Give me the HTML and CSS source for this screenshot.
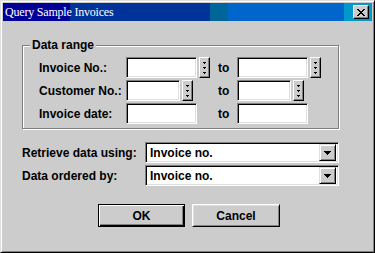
FILE: index.html
```html
<!DOCTYPE html>
<html lang="en">
<head>
    <meta charset="UTF-8">
    <meta name="viewport" content="width=device-width, initial-scale=1.0">
    <title>Query Sample Invoices</title>
    <link rel="stylesheet" href="styles.css">
</head>
<body>

    <div class="window">
        <div class="titlebar">
            <span class="title">Query Sample Invoices</span>
            <button class="close" type="button">
                <svg width="8" height="7" viewBox="0 0 8 7" shape-rendering="crispEdges">
                    <path d="M0 0h2v1H0zM6 0h2v1H6zM1 1h2v1H1zM5 1h2v1H5zM2 2h4v1H2zM3 3h2v1H3zM2 4h4v1H2zM1 5h2v1H1zM5 5h2v1H5zM0 6h2v1H0zM6 6h2v1H6z" fill="#000"/>
                </svg>
            </button>
        </div>

        <div class="content">
            <!-- Data range -->
            <div class="group">
                <div class="group-title">Data range</div>
                <div class="range">
                    <label>Invoice No.:</label>
                    <div class="field">
                        <input class="text wide" type="text">
                        <span class="spin"></span>
                    </div>
                    <span class="to">to</span>
                    <div class="field">
                        <input class="text wide" type="text">
                        <span class="spin"></span>
                    </div>

                    <label>Customer No.:</label>
                    <div class="field">
                        <input class="text short" type="text">
                        <span class="spin"></span>
                    </div>
                    <span class="to">to</span>
                    <div class="field">
                        <input class="text short" type="text">
                        <span class="spin"></span>
                    </div>

                    <label>Invoice date:</label>
                    <div class="field">
                        <input class="text wide" type="text">
                    </div>
                    <span class="to">to</span>
                    <div class="field">
                        <input class="text wide" type="text">
                    </div>
                </div>
            </div>

            <div class="options">
                <label>Retrieve data using:</label>
                <div class="combo">
                    <span class="value">Invoice no.</span>
                    <span class="drop"></span>
                </div>
                <label>Data ordered by:</label>
                <div class="combo">
                    <span class="value">Invoice no.</span>
                    <span class="drop"></span>
                </div>
            </div>

            <div class="buttons">
                <button class="btn default" type="button">OK</button>
                <button class="btn" type="button">Cancel</button>
            </div>
        </div>
    </div>

    <script>
        // flechitas del spinner y del combo
        const spinSvg = '<svg width="3" height="12" viewBox="0 0 3 12" shape-rendering="crispEdges"><path d="M0 0h3v1H0zM1 1h1v1H1zM0 5h3v1H0zM1 6h1v1H1zM0 10h3v1H0zM1 11h1v1H1z" fill="#000"/></svg>';
        const dropSvg = '<svg width="7" height="4" viewBox="0 0 7 4" shape-rendering="crispEdges"><path d="M0 0h7v1H0zM1 1h5v1H1zM2 2h3v1H2zM3 3h1v1H3z" fill="#000"/></svg>';

        document.querySelectorAll('.spin').forEach(el => el.innerHTML = spinSvg);
        document.querySelectorAll('.drop').forEach(el => el.innerHTML = dropSvg);
    </script>
</body>
</html>
```

FILE: styles.css
```css
* {
    box-sizing: border-box;
}

body {
    margin: 0;
    font-family: "Liberation Sans", Arial, sans-serif;
    font-size: 12px;
    font-weight: bold;
    color: #000;
}

.window {
    width: 375px;
    height: 253px;
    padding: 2px;
    background: #cccccc;
    border: 1px solid;
    border-color: #dfdfdf #000 #000 #dfdfdf;
    box-shadow: inset 1px 1px #fff, inset -1px -1px #808080;
}

.titlebar {
    display: flex;
    align-items: center;
    justify-content: space-between;
    height: 18px;
    padding: 0 3px 0 2px;
    background: linear-gradient(to right,
        #000099 0 67px,
        #003399 67px 207px,
        #006699 207px 225px,
        #0066cc 225px 341px,
        #0099cc 341px);
}

.title {
    font-family: "Liberation Serif", "Times New Roman", serif;
    font-weight: normal;
    font-size: 12px;
    letter-spacing: -0.2px;
    color: #fff;
}

.close {
    display: flex;
    align-items: center;
    justify-content: center;
    width: 16px;
    height: 14px;
    padding: 0;
    background: #cccccc;
    border: 1px solid;
    border-color: #fff #000 #000 #fff;
    box-shadow: inset -1px -1px #808080;
}

.content {
    padding: 24px 0 0 19px;
}

.group {
    width: 317px;
    padding: 0 0 4px 16px;
    border: 1px solid #808080;
    box-shadow: inset 1px 1px #fff, 1px 1px #fff;
}

.group-title {
    width: fit-content;
    margin: -8px 0 0 -9px;
    padding: 0 2px;
    line-height: 14px;
    background: #cccccc;
}

.range {
    display: grid;
    grid-template-columns: 87px 92px 19px auto;
    grid-auto-rows: 21px;
    row-gap: 2px;
    align-items: center;
    margin-top: 5px;
}

.field {
    display: flex;
    gap: 2px;
    height: 21px;
}

.text {
    height: 21px;
    margin: 0;
    padding: 0 2px;
    background: #fff;
    border: 1px solid;
    border-color: #808080 #fff #fff #808080;
    box-shadow: inset 1px 1px #000, inset -1px -1px #dfdfdf;
    outline: none;
}

.wide {
    width: 71px;
}

.short {
    width: 54px;
}

.spin {
    display: flex;
    align-items: center;
    justify-content: center;
    width: 11px;
    height: 21px;
    background: #cccccc;
    border: 1px solid;
    border-color: #fff #000 #000 #fff;
    box-shadow: inset -1px -1px #808080;
}

.spin svg,
.drop svg {
    display: block;
}

.options {
    display: grid;
    grid-template-columns: 123px 194px;
    grid-auto-rows: 21px;
    row-gap: 2px;
    align-items: center;
    margin-top: 13px;
}

.combo {
    display: flex;
    align-items: center;
    justify-content: space-between;
    height: 21px;
    padding: 2px 2px 2px 4px;
    background: #fff;
    border: 1px solid;
    border-color: #808080 #fff #fff #808080;
    box-shadow: inset 1px 1px #000, inset -1px -1px #dfdfdf;
}

.drop {
    display: flex;
    align-items: center;
    justify-content: center;
    width: 17px;
    height: 17px;
    background: #cccccc;
    border: 1px solid;
    border-color: #dfdfdf #000 #000 #dfdfdf;
    box-shadow: inset 1px 1px #fff, inset -1px -1px #808080;
}

.buttons {
    display: flex;
    gap: 7px;
    margin-top: 18px;
    padding-left: 76px;
}

.btn {
    width: 88px;
    height: 23px;
    padding: 0;
    font-family: inherit;
    font-size: 12px;
    font-weight: bold;
    color: #000;
    background: #cccccc;
    border: 1px solid;
    border-color: #fff #000 #000 #fff;
    box-shadow: inset 1px 1px #dfdfdf, inset -1px -1px #808080;
}

.btn.default {
    width: 87px;
    border-color: #000;
    box-shadow: inset 1px 1px #fff, inset -1px -1px #000, inset -2px -2px #808080;
}
```
